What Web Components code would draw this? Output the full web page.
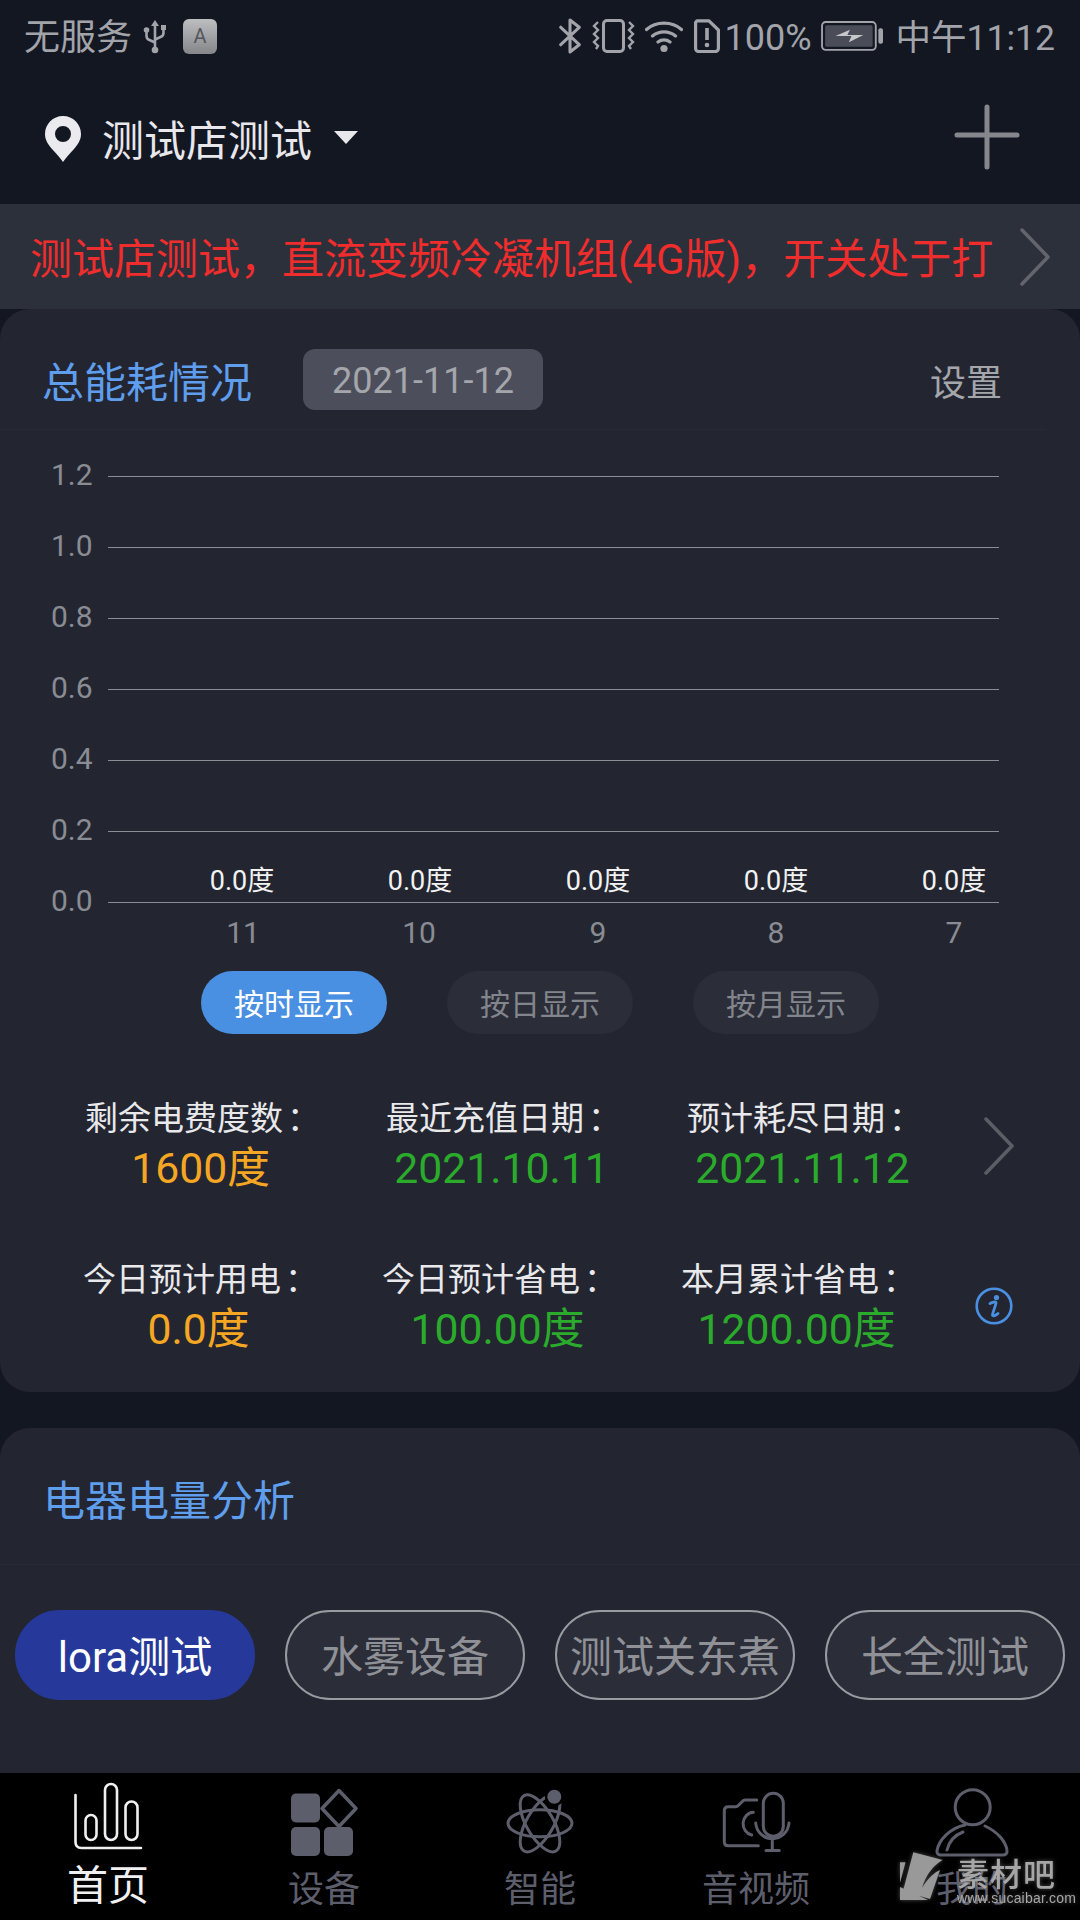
<!DOCTYPE html>
<html lang="zh-CN"><head><meta charset="utf-8"><title>首页</title>
<style>
html,body{margin:0;padding:0;background:#131722}
body{width:1080px;height:1920px;overflow:hidden;font-family:Roboto,"Noto Sans CJK SC",sans-serif}
app-shell{display:flex}
</style></head><body>
<app-shell>
  <status-bar></status-bar>
  <top-header></top-header>
  <notice-bar>测试店测试，直流变频冷凝机组(4G版)，开关处于打</notice-bar>
  <energy-card></energy-card>
  <analysis-card></analysis-card>
  <tab-bar></tab-bar>
  <water-mark></water-mark>
</app-shell>
<script>
function def(name, css, html){
  customElements.define(name, class extends HTMLElement{
    connectedCallback(){
      if(this.shadowRoot) return;
      const r=this.attachShadow({mode:'open'});
      r.innerHTML='<style>'+css+'</style>'+(typeof html==='function'?html(this):html);
    }
  });
}
const FONT='Roboto,"Noto Sans CJK SC",sans-serif';

def('app-shell',`:host{display:flex;flex-direction:column;width:1080px;height:1920px;position:relative;overflow:hidden;background:#131722;font-family:${FONT}}`,`<slot></slot>`);

const SC='#a2a4aa';
def('status-bar',`
:host{display:flex;align-items:center;height:72px;padding:0 25px 0 24px;box-sizing:border-box;color:${SC};font-size:35.500px;flex:none}
.l,.r{display:flex;align-items:center}
.l{flex:1}
svg{display:block;flex:none}
.key{width:34px;height:35px;border-radius:6px;background:linear-gradient(#bdbec0,#85868a);color:#55565c;font-size:20px;display:flex;align-items:center;justify-content:center;margin-left:16px}
.t{line-height:68px;padding-top:4px;white-space:nowrap}
.w{font-size:36px}
`,`
<div class="l"><span class="t w">无服务</span>
<svg style="margin-left:11px" width="24" height="35" viewBox="0 0 24 35" fill="${SC}" stroke="${SC}"><path d="M12 1l4 6h-8z" stroke="none"/><path d="M12 5v25M3.500 13v4q0 3 3 4l5.500 2.500M20.500 10v4q0 3-3 4L12 20.500" fill="none" stroke-width="2.600"/><circle cx="12" cy="31" r="3.300" stroke="none"/><circle cx="3.500" cy="11" r="2.800" stroke="none"/><rect x="18" y="6" width="5" height="5" stroke="none"/></svg>
<div class="key">A</div></div>
<div class="r">
<svg width="24" height="36" viewBox="0 0 22 35" fill="none" stroke="${SC}" stroke-width="3" stroke-linejoin="round" stroke-linecap="round"><path d="M2 9l18 17-9 7V2l9 7L2 26"/></svg>
<svg style="margin-left:10px" width="43" height="34" viewBox="0 0 43 34" fill="none" stroke="${SC}" stroke-width="3"><rect x="11.500" y="1.500" width="20" height="31" rx="3.500"/><path d="M6 3 2 7l4 4-4 4 4 4-4 4 4 4-2 3M37 3l4 4-4 4 4 4-4 4 4 4-4 4 2 3" stroke-width="2.400"/></svg>
<svg style="margin-left:10px" width="38" height="33" viewBox="0 0 38 33" fill="none" stroke="${SC}" stroke-width="3.200" stroke-linecap="round"><path d="M1.500 9.500C11 1 27 1 36.500 9.500M7.500 16C14 10.500 24 10.500 30.500 16M13 22c3.500-2.800 8.500-2.800 12 0"/><circle cx="19" cy="28.500" r="3.600" fill="${SC}" stroke="none"/></svg>
<svg style="margin-left:11px" width="26" height="34" viewBox="0 0 26 34" fill="none" stroke="${SC}" stroke-width="3.200" stroke-linejoin="round"><path d="M3 1.800h12L24.400 11v18.500a3 3 0 0 1-3 3H4.600a3 3 0 0 1-3-3V3.500z"/><path d="M13 9v12" stroke-width="3.600"/><circle cx="13" cy="26" r="2.300" fill="${SC}" stroke="none"/></svg>
<span class="t" style="margin-left:5px;font-size:36px">100%</span>
<svg style="margin-left:9px" width="62" height="31" viewBox="0 0 60 30" fill="none"><rect x="1" y="1" width="52" height="27" rx="3.500" stroke="${SC}" stroke-width="1.800"/><rect x="4" y="4" width="46" height="21" rx="1.500" fill="#4a4d58"/><path d="M14 14.500l14-6-2.500 5H41l-14 7 2.500-6z" fill="#c6c7cb"/><rect x="55.500" y="7" width="4.500" height="15" rx="2" fill="${SC}"/></svg>
<span class="t" style="margin-left:13px">中午11:12</span>
</div>`);

def('top-header',`
:host{display:flex;align-items:center;height:132px;box-sizing:border-box;padding:0 0 2px 45px;flex:none;color:#e8e8ec;font-size:40px}
.pin{margin-top:3px}
.n{margin-left:21px;font-size:42px;white-space:nowrap}
.a{margin-left:22px}
.sp{flex:1}
.p{margin-right:60px}
svg{display:block;flex:none}
`,`
<svg class="pin" width="36" height="46" viewBox="0 0 36 46"><path fill-rule="evenodd" fill="#eaeaef" d="M18 0C8 0 0 8 0 18c0 6 3 10 7 15 4 4 8 9 11 13 3-4 7-9 11-13 4-5 7-9 7-15C36 8 28 0 18 0zm0 10a8 8 0 1 1 0 16 8 8 0 0 1 0-16z"/></svg>
<span class="n">测试店测试</span>
<svg class="a" width="24" height="13" viewBox="0 0 24 13"><path d="M0 0h24L12 13z" fill="#e8e8ec"/></svg>
<span class="sp"></span>
<svg class="p" width="66" height="66" viewBox="0 0 66 66" stroke="#85878c" stroke-width="5" stroke-linecap="round"><path d="M33 3v60M3 31h60"/></svg>
`);

const chev=(c,w,h)=>`<svg width="${w}" height="${h}" viewBox="0 0 ${w} ${h}" fill="none" stroke="${c}" stroke-width="3.500" stroke-linecap="round" stroke-linejoin="round" style="display:block;flex:none"><path d="M2 2L${w-2} ${h/2}L2 ${h-2}"/></svg>`;

def('notice-bar',`
:host{display:flex;align-items:center;height:105px;flex:none;background:#2c303b;padding:0 30px 0 30px;box-sizing:border-box;color:#f02d2d;font-size:42px}
.t{flex:1;white-space:nowrap;overflow:hidden;min-width:0;padding-bottom:2px}
`,`<div class="t"><slot></slot></div>${chev('#63656c',30,58)}`);

def('energy-card',`
:host{display:block;height:1083px;flex:none;background:#232631;border-radius:30px;box-sizing:border-box}
.head{display:flex;align-items:center;height:121px;box-sizing:border-box;padding:20px 0 0 42px;margin-right:34px;border-bottom:1px solid #282b36}
.ttl{font-size:42px;color:#5f9ded;white-space:nowrap;width:261px}
.date{width:240px;height:61px;background:#4c4f5b;border-radius:12px;color:#a4a6ac;font-size:36px;display:flex;align-items:center;justify-content:center;box-sizing:border-box;padding-top:3px}
.sp{flex:1}
.set{font-size:36px;color:#a4a6ac;margin-right:44px;padding-top:2px}
.mode{display:flex;padding-left:201px;margin-top:7px}
mode-pill{margin-right:60px}
.stats{padding-top:62px}
stat-row+stat-row{margin-top:63px}
`,`
<div class="head"><span class="ttl">总能耗情况</span><span class="date">2021-11-12</span><span class="sp"></span><span class="set">设置</span></div>
<bar-chart></bar-chart>
<div class="mode"><mode-pill active>按时显示</mode-pill><mode-pill>按日显示</mode-pill><mode-pill>按月显示</mode-pill></div>
<div class="stats">
<stat-row pad="50" cw="301" icon="chev">
 <stat-cell label="剩余电费度数" value="1600度" tone="o"></stat-cell>
 <stat-cell label="最近充值日期" value="2021.10.11" tone="g"></stat-cell>
 <stat-cell label="预计耗尽日期" value="2021.11.12" tone="g"></stat-cell>
</stat-row>
<stat-row pad="49" cw="299" icon="info">
 <stat-cell label="今日预计用电" value="0.0度" tone="o"></stat-cell>
 <stat-cell label="今日预计省电" value="100.00度" tone="g"></stat-cell>
 <stat-cell label="本月累计省电" value="1200.00度" tone="g"></stat-cell>
</stat-row>
</div>`);

const ys=['1.2','1.0','0.8','0.6','0.4','0.2','0.0'];
const xs=['11','10','9','8','7'];
def('bar-chart',`
:host{display:block;margin-top:11px;position:relative}
.row{display:flex;align-items:center;height:71px}
.y{width:108px;box-sizing:border-box;padding-left:51px;font-size:30px;color:#8a8c93;line-height:71px;position:relative;top:-2px}
.row:last-of-type .y{top:-1px}
.ln{width:891px;height:1px;background:#8b8d94}
.x{display:flex;height:62px;margin-top:-36.500px;align-items:center;position:relative;padding-left:153px}
.x span{width:178px;box-sizing:border-box;text-align:center;font-size:30px;color:#8a8c93}
.x span:nth-child(1){padding-left:2px}
.x span:nth-child(2){padding-right:2px}
.v{position:absolute;left:153px;top:422px;display:flex}
.v span{width:178px;text-align:center;font-size:27px;color:#f2f2f2;line-height:36px;white-space:nowrap}
`,`
${ys.map(y=>`<div class="row"><span class="y">${y}</span><div class="ln"></div></div>`).join('')}
<div class="v">${xs.map(()=>'<span>0.0度</span>').join('')}</div>
<div class="x">${xs.map(a=>`<span>${a}</span>`).join('')}</div>`);

def('mode-pill',`
:host{display:flex;align-items:center;justify-content:center;width:186px;height:63px;border-radius:32px;background:#2b2e38;color:#83858c;font-size:30px;white-space:nowrap}
:host([active]){background:#4a90e2;color:#fff}
`,`<slot></slot>`);

def('stat-row',`
:host{display:flex;align-items:center}
.ic{flex:none}
svg{display:block}
`,el=>{
  const pad=el.getAttribute('pad'), cw=el.getAttribute('cw'), ic=el.getAttribute('icon');
  const svg= ic==='chev'
   ? `<div class="ic" style="margin-left:31px;margin-top:2px">${chev('#5c5e66',30,58)}</div>`
   : `<div class="ic" style="margin-left:29px;margin-top:0"><svg width="38" height="38" viewBox="0 0 38 38"><circle cx="19" cy="19" r="17.300" fill="none" stroke="#4a90e2" stroke-width="2.600"/><circle cx="21.500" cy="10.500" r="2.600" fill="#4a90e2"/><path d="M15 16.500c2-1 6-2.500 6-.8 0 2-3.500 10.500-3.500 12.300 0 1.700 3.500.3 5.500-1.500" fill="none" stroke="#4a90e2" stroke-width="2.800" stroke-linecap="round"/></svg></div>`;
  return `<style>:host{padding-left:${pad}px}::slotted(stat-cell){width:${cw}px}</style><slot></slot>${svg}`;
});

def('stat-cell',`
:host{display:block;text-align:center;flex:none;white-space:nowrap}
.l{font-size:33px;line-height:46px;color:#e9e9ec}
.c{font-family:Roboto,"Noto Sans CJK TC",sans-serif;margin-left:4px;margin-right:-4px}
.v{font-size:42.700px;line-height:52px}
.o{color:#f5a623}.g{color:#2bab2b}
`,el=>`<div class="l">${el.getAttribute('label')}<span class="c">：</span></div><div class="v ${el.getAttribute('tone')}">${el.getAttribute('value')}</div>`);

def('analysis-card',`
:host{display:block;flex:1;margin-top:36px;background:#232631;border-radius:30px 30px 0 0;min-height:0}
.head{height:137px;box-sizing:border-box;padding:3px 0 0 43px;display:flex;align-items:center;border-bottom:1px solid #282b36;font-size:42px;color:#5f9ded}
.chips{display:flex;padding:45px 15px 0;gap:30px}
`,`<div class="head">电器电量分析</div>
<div class="chips"><device-chip active>lora测试</device-chip><device-chip>水雾设备</device-chip><device-chip>测试关东煮</device-chip><device-chip>长全测试</device-chip></div>`);

def('device-chip',`
:host{display:flex;align-items:center;justify-content:center;width:240px;height:90px;box-sizing:border-box;border-radius:45px;border:2px solid #9a9ba1;background:#2b2e38;color:#8f9197;font-size:42px;white-space:nowrap;flex:none;padding-bottom:4px}
:host([active]){background:#26399a;border-color:#26399a;color:#fff}
`,`<slot></slot>`);

const IC='#5d5e6b';
const icons={
home:`<g fill="none" stroke="#f0f0f2" stroke-width="2.600" stroke-linecap="round"><path d="M7.500 15V62q0 6 6 6H73"/><rect x="17.500" y="35" width="11" height="25" rx="5.500"/><rect x="37" y="4" width="12" height="56" rx="6"/><rect x="57.500" y="21.500" width="12" height="38.500" rx="6"/></g>`,
dev:`<g fill="${IC}"><rect x="7" y="13.500" width="29" height="29" rx="5"/><rect x="7" y="47" width="29" height="29" rx="5"/><rect x="40" y="47" width="29" height="29" rx="5"/></g><path d="M55 10.500L72 28.500 55 46.500 38 28.500z" fill="none" stroke="${IC}" stroke-width="3.500" stroke-linejoin="round"/>`,
atom:`<g fill="none" stroke="${IC}" stroke-width="3"><ellipse cx="40" cy="43.300" rx="32" ry="13.500"/><ellipse cx="40" cy="43.300" rx="32" ry="13.500" transform="rotate(60 40 43.300)"/><ellipse cx="40" cy="43.300" rx="32" ry="13.500" transform="rotate(-60 40 43.300)"/></g><circle cx="54.300" cy="16.700" r="9.500" fill="#000"/><circle cx="54.300" cy="16.700" r="7" fill="${IC}"/>`,
av:`<g fill="none" stroke="${IC}" stroke-width="3" stroke-linecap="round"><path d="M40.700 20H29q-1.500 0-2.700 1.500l-4 4q-1 1.200-2.500 1.200h-7.500q-4 0-4 4V61.700q0 4 4 4H42.300"/><rect x="47.300" y="13.300" width="20" height="43" rx="10"/><path d="M39.700 43a16.700 17 0 0 0 33.300 0M56.300 60v10M50 70.500h13.300"/><path d="M37.300 32.300a11 11.500 0 0 0-1.600 22.700"/></g>`,
me:`<g fill="none" stroke="${IC}" stroke-width="3" stroke-linecap="round"><circle cx="40.700" cy="27.300" r="17.500"/><path d="M53 46C66 52 74 62 75 70.500 75.500 73.500 73.500 75 71 75H9C6.500 75 4.500 73.500 5 70.500 7 60 18 48 33 45"/><path d="M15 70C17 62 23 55 31 52"/></g>`
};
def('tab-bar',`
:host{display:flex;height:147px;flex:none;background:#000}
tab-item{flex:1}
`,`<tab-item icon="home" active>首页</tab-item><tab-item icon="dev">设备</tab-item><tab-item icon="atom">智能</tab-item><tab-item icon="av">音视频</tab-item><tab-item icon="me">我的</tab-item>`);
def('tab-item',`
:host{display:flex;flex-direction:column;align-items:center;padding-top:7px;color:${IC};font-size:36px}
:host([active]){color:#f0f0f2;font-size:41px}
svg{display:block;flex:none}
.t{line-height:44px;margin-top:8px;white-space:nowrap}
:host([active]) .t{margin-top:4px}
`,el=>`<svg width="80" height="80" viewBox="0 0 80 80" overflow="visible">${icons[el.getAttribute('icon')]}</svg><div class="t"><slot></slot></div>`);

def('water-mark',`
:host{position:absolute;left:898px;top:1850px;width:170px;height:56px;display:flex;filter:drop-shadow(0 0 2px rgba(255,255,255,.3))}
svg{display:block;flex:none}
.b{margin-left:13px;color:#a6a6a6;white-space:nowrap}
.a{font-size:32px;line-height:32px;letter-spacing:1px;margin-top:9px;font-weight:500}
.u{font-size:14px;line-height:14px;font-family:"Liberation Sans",sans-serif;letter-spacing:.2px;margin-top:0}
`,`<svg width="46" height="52" viewBox="0 0 46 52"><path fill="#999" d="M15.300 2.300L44.700 10C36 15 28 24 24 38 30 28 37 22 42 20L32 49 5 41zM2 12.300h5.500L2 33zM2 37L30 50H2z"/></svg><div class="b"><div class="a">素材吧</div><div class="u">www.sucaibar.com</div></div>`);
</script>
</body></html>
